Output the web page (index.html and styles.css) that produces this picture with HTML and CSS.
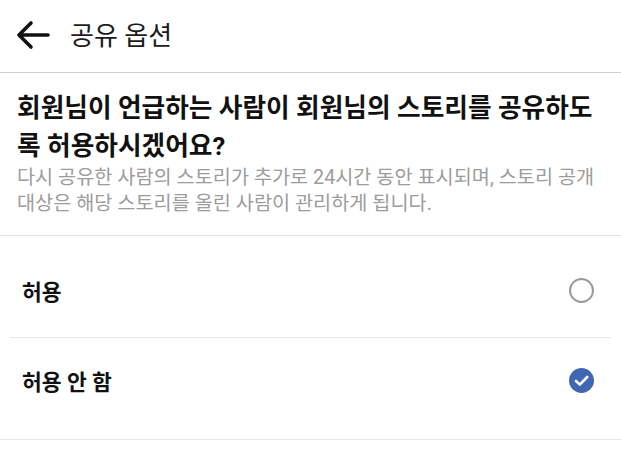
FILE: index.html
```html
<!DOCTYPE html>
<html lang="ko">
<head>
  <meta charset="UTF-8">
  <meta name="viewport" content="width=device-width, initial-scale=1.0">
  <title>공유 옵션</title>
  <link rel="stylesheet" href="styles.css">
</head>
<body>
  <header class="top-bar">
    <svg class="back-icon" width="34" height="30" viewBox="0 0 34 30">
      <path d="M3 15H32M15 3L3 15L15 27" fill="none" stroke="#111" stroke-width="3.6" stroke-linecap="round" stroke-linejoin="round"/>
    </svg>
    <h1 class="title">공유 옵션</h1>
  </header>

  <section class="intro">
    <h2 class="question">회원님이 언급하는 사람이 회원님의 스토리를 공유하도록 허용하시겠어요?</h2>
    <p class="desc">다시 공유한 사람의 스토리가 추가로 24시간 동안 표시되며, 스토리 공개 대상은 해당 스토리를 올린 사람이 관리하게 됩니다.</p>
  </section>

  <ul class="options">
    <li class="option first">
      <span class="option-label">허용</span>
      <span class="radio"></span>
    </li>
    <li class="option second">
      <span class="option-label">허용 안 함</span>
      <svg class="check" width="25" height="25" viewBox="0 0 25 25">
        <circle cx="12.5" cy="12.5" r="12.5" fill="#4267b2"/>
        <path d="M7 13l3.8 3.6L18.2 9" fill="none" stroke="#fff" stroke-width="2.6" stroke-linecap="round" stroke-linejoin="round"/>
      </svg>
    </li>
  </ul>
</body>
</html>
```

FILE: styles.css
```css
body {
  margin: 0;
  background: #ffffff;
  color: #111111;
  font-family: Roboto, "Noto Sans CJK KR", sans-serif;
}

.top-bar {
  height: 72px;
  display: flex;
  align-items: center;
  padding-left: 16px;
  border-bottom: 1px solid #cfcfcf;
}

.back-icon {
  display: block;
  margin-top: -2px;
}

.title {
  margin: 0 0 0 20px;
  font-size: 26px;
  font-weight: 400;
  line-height: 30px;
  color: #1c1c1c;
}

.intro {
  padding: 16px 17px 18px;
  border-bottom: 1px solid #e3e3e3;
}

.question {
  margin: 0;
  font-size: 25.7px;
  font-weight: 700;
  line-height: 38px;
  color: #111111;
}

.desc {
  margin: 0;
  font-size: 19.7px;
  line-height: 26px;
  color: #9c9c9c;
  word-break: keep-all;
}

.options {
  list-style: none;
  margin: 0;
  padding: 0;
}

.option {
  height: 102px;
  box-sizing: border-box;
  display: flex;
  align-items: center;
  justify-content: space-between;
  padding: 0 27px 0 22px;
}

.option.first {
  padding-top: 8px;
  margin: 0 10px;
  padding-left: 12px;
  padding-right: 17px;
  border-bottom: 1px solid #e6e6e6;
}

.option.second {
  padding-bottom: 16px;
  border-bottom: 1px solid #e6e6e6;
}

.option-label {
  font-size: 21.5px;
  font-weight: 700;
  color: #111111;
}

.radio {
  width: 21px;
  height: 21px;
  border: 2px solid #9a9a9a;
  border-radius: 50%;
}

.check {
  display: block;
}
```
